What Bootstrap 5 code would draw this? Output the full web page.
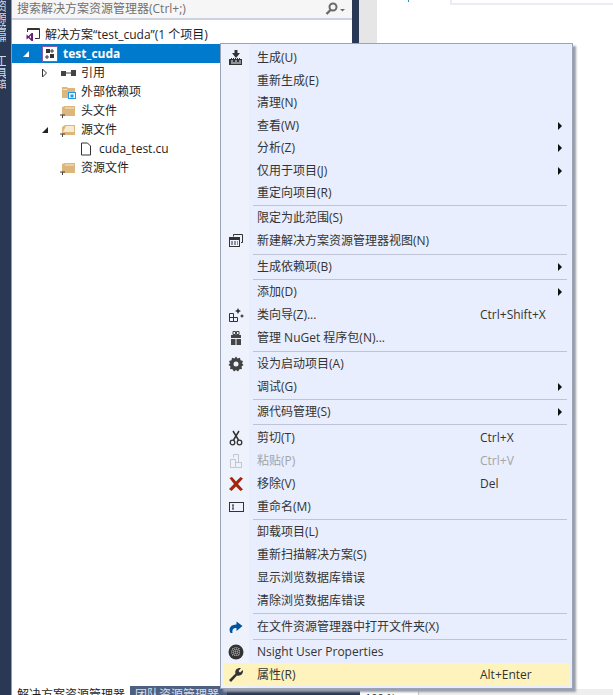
<!DOCTYPE html>
<html lang="zh">
  <head>
    <meta charset="UTF-8" />
    <title>解决方案资源管理器</title>
    <link href="https://cdn.jsdelivr.net/npm/bootstrap@5.3.0/dist/css/bootstrap.min.css" rel="stylesheet" />
    <style>
      html, body { height: 100%; overflow: hidden; }
      body { background: #fff; font: 12px/1 "Open Sans", "Noto Sans CJK SC", sans-serif; color: #1e1e1e; }
      svg { display: block; }
      .ide { width: 613px; height: 695px; position: relative; overflow: hidden; }
      .side-rail { width: 12px; background: #293955; border-right: 1px solid #8f9ab5; flex: none; overflow: hidden; color: #cfd6e6; }
      .rail-text { writing-mode: vertical-rl; width: 6px; height: 42px; overflow: hidden; white-space: nowrap; font-size: 12px; line-height: 12px; direction: ltr; }
      .rail-text + .rail-text { margin-top: 13px; height: 34px; }
      .explorer { width: 340px; flex: none; background: #fff; }
      .search-box { height: 20px; padding: 0 5px 0 5px; background: #f6f6f6; border-bottom: 2px solid #ccd2e0; color: #717171; font-size: 12px; }
      .tree { padding-top: 5px; }
      .tree-row { height: 19px; white-space: nowrap; }
      .tree-row.picked { background: #007acc; color: #fff; font-weight: 700; }
      .row-solution { padding-left: 13px; }
      .row-ref, .row-src { padding-left: 29px; }
      .row-folder { padding-left: 48px; }
      .row-file { padding-left: 68px; }
      .folder-icon { margin-right: 5px; }
      .splitter { width: 7px; background: #293955; flex: none; height: 43px; }
      .gray-strip { width: 18px; background: #e6e6e6; flex: none; height: 43px; }
      .editor { flex: 1; position: relative; }
      .editor-box { margin-left: 73px; height: 5px; border: solid #e9ecf4; border-width: 0 0 2px 2px; }
      .editor-mark { position: absolute; left: 31px; top: 0; width: 1px; height: 2px; background: #2b91af; }
      .tabs-bar { height: 9px; left: 12px; right: 253px; bottom: 0; position: absolute; background: #293955; overflow: hidden; font-size: 12px; }
      .tool-tab { padding: 3px 5px 0; height: 20px; white-space: nowrap; }
      .tool-tab.on { width: 118px; background: #fff; color: #1e1e1e; }
      .tool-tab.off { width: 97px; background: #4d6082; color: #d8dfea; }
      .ctx-menu { position: absolute; left: 220px; top: 43px; width: 353px; height: 646px; padding: 3px 2px 0; background: linear-gradient(90deg, #eef2fd 28px, #e8eefd 28px); border: 1px solid #9ba3b9; box-shadow: 3px 3px 2px #9a9ea8; color: #333; z-index: 2; }
      .ctx-item { height: 23px; white-space: nowrap; }
      .ctx-item:nth-child(-n+7) { height: 22.5px; }
      .ctx-item.hot { background: #fff3bd; }
      .ctx-item.off { color: #a2a4a5; }
      .ctx-icon { width: 26px; flex: none; margin-right: 8px; }
      .ctx-label { width: 223px; flex: none; }
      .ctx-keys { flex: 1; }
      .ctx-arrow { width: 0; height: 0; margin-right: 8px; border: 4px solid transparent; border-left: 4px solid #111; border-right-width: 0; }
      .ctx-sep { height: 1px; margin: .72px 3px .72px 30px; background: #bec3d7; }
      .status-tail { position: absolute; left: 360px; right: 0; bottom: 0; height: 6px; background: #eee; overflow: hidden; }
      .status-zoom { width: 59px; height: 100%; padding: 3px 0 0 5px; background: #fff; border-right: 1px solid #c4c4c4; font-size: 11px; white-space: nowrap; }
    </style>
  </head>
  <body>
    <div class="ide">
      <div class="d-flex h-100">
        <div class="side-rail">
          <div class="rail-text">资源管理器</div>
          <div class="rail-text">工具箱</div>
        </div>
        <div class="explorer">
          <div class="search-box d-flex align-items-center justify-content-between">
            <span>搜索解决方案资源管理器(Ctrl+;)</span>
            <svg width="22" height="14" viewBox="0 0 22 14"><circle cx="8" cy="5" r="3.500" fill="none" stroke="#6a6a6a" stroke-width="2"/><path d="M5.500 8 1.500 12" stroke="#6a6a6a" stroke-width="2.400"/><path d="M15 7h5l-2.500 2.500z" fill="#6a6a6a"/></svg>
          </div>
          <div class="tree">
            <div class="tree-row row-solution d-flex align-items-center">
              <svg class="me-1" width="16" height="15" viewBox="0 0 16 15"><path d="M2.500 5V1.500h12v10H10" fill="none" stroke="#333"/><path d="M3 2.500h11" stroke="#333"/><path d="M1.500 7.500v5l2-1.500 3 3h1.500V6H6.500l-3 3z" fill="#68217a"/><path d="M6 8.500v3L4.500 10z" fill="#fff"/></svg>
              <span>解决方案“test_cuda”(1 个项目)</span>
            </div>
            <div class="tree-row picked d-flex align-items-center">
              <svg style="margin: 0 12px 0 10px" width="8" height="8" viewBox="0 0 8 8"><path d="M7 1v6H1z" fill="#fff"/></svg>
              <svg style="margin-right: 5px" width="16" height="16" viewBox="0 0 16 16"><rect x=".5" y=".5" width="15" height="15" fill="#fff" stroke="#8a5aa5" /><path d="M4 3h4v4H4zM8 8h4v4H8z" fill="#333"/><path d="M10 3v4M8 5h4M5 9v4M3 11h4" stroke="#333"/></svg>
              <span>test_cuda</span>
            </div>
            <div class="tree-row row-ref d-flex align-items-center">
              <svg width="8" height="10" viewBox="0 0 8 10"><path d="M1.500 1v8l4-4z" fill="#fff" stroke="#333"/></svg>
              <svg style="margin: 0 5px 0 11px" width="16" height="8" viewBox="0 0 16 8"><path d="M1 2h5v5H1zM11 1h5v6h-5z" fill="#444"/><path d="M6 4h5" stroke="#444"/></svg>
              <span>引用</span>
            </div>
            <div class="tree-row row-folder d-flex align-items-center">
              <svg class="folder-icon" width="16" height="14" viewBox="0 0 16 14"><path d="M2 2h5l1 1h7v4H8v6H2z" fill="#dcb67a"/><path d="M3 4h4v1H3z" fill="#f5ead2"/><rect x="8.500" y="7.500" width="7" height="6" fill="#fff" stroke="#1c97ea"/><path d="M10.500 9.500h3v3h-3z" fill="#1c97ea"/></svg>
              <span>外部依赖项</span>
            </div>
            <div class="tree-row row-folder d-flex align-items-center">
              <svg class="folder-icon" width="16" height="14" viewBox="0 0 16 14"><path d="M2 3l3-1h10v10H2z" fill="#dcb67a"/><path d="M5 4h9" stroke="#f5ead2"/><path d="M0 11h5M2.500 11v3" stroke="#444"/></svg>
              <span>头文件</span>
            </div>
            <div class="tree-row row-src d-flex align-items-center">
              <svg style="margin-right: 11px" width="8" height="8" viewBox="0 0 8 8"><path d="M7 1v6H1z" fill="#222"/></svg>
              <svg class="folder-icon" width="16" height="14" viewBox="0 0 16 14"><path d="M2 4l3-2h10v10H2z" fill="#dcb67a"/><path d="M6 3h8v6H3z" fill="#f5ead2"/><path d="M0 11h5M2.500 11v3" stroke="#444"/></svg>
              <span>源文件</span>
            </div>
            <div class="tree-row row-file d-flex align-items-center">
              <svg style="margin-right: 7px" width="12" height="14" viewBox="0 0 12 14"><path d="M1.500 1h6l3 3v9h-9z" fill="#fff" stroke="#333"/></svg>
              <span>cuda_test.cu</span>
            </div>
            <div class="tree-row row-folder d-flex align-items-center">
              <svg class="folder-icon" width="16" height="14" viewBox="0 0 16 14"><path d="M2 3l3-1h10v10H2z" fill="#dcb67a"/><path d="M5 4h9" stroke="#f5ead2"/><path d="M0 11h5M2.500 11v3" stroke="#444"/></svg>
              <span>资源文件</span>
            </div>
          </div>
        </div>
        <div class="splitter"></div>
        <div class="gray-strip"></div>
        <div class="editor"><div class="editor-box"></div><div class="editor-mark"></div></div>
      </div>

      <div class="tabs-bar d-flex">
        <div class="tool-tab on">解决方案资源管理器</div>
        <div class="tool-tab off">团队资源管理器</div>
      </div>
      <div class="status-tail"><div class="status-zoom">100 %</div></div>

      <div class="ctx-menu" id="menu"></div>
    </div>

    <script>
      // icons for the menu gutter
      const icons = {
        build: '<path d="M6.500 0h3v3H12L8 8 4 3h2.500zM1 9h2V8h1v1h1V8h1v1h1V8h1v1h1V8h1v1h1V8h1v1h2v6H1z" fill="#333"/><path d="M3 11h2M7 11h2M11 11h2M3 13h10" stroke="#eef2fd"/>',
        view: '<path d="M5.500 3.500V1.500h9v8H13" fill="none" stroke="#333"/><rect x="1.500" y="4.500" width="10" height="9" fill="none" stroke="#333"/><path d="M2 5h9v2H2z" fill="#333"/><path d="M3 9h7M3 11h7" stroke="#333" stroke-dasharray="2 1"/>',
        wizard: '<path d="M1.500 6.500h4v8h-4zM5.500 10.500h4v4h-4zM1.500 10.500h4" fill="none" stroke="#333"/><path d="M10 1l1 2 2 1-2 1-1 2-1-2-2-1 2-1zM14 7l.7 1.300 1.300.7-1.300.7-.7 1.300-.7-1.300L12 9l1.300-.7z" fill="#333"/>',
        nuget: '<path d="M5 1.500h2.500v3H5zM8.500 1.500H11v3H8.500z" fill="none" stroke="#444"/><path d="M3 5h10v3H3zM3 9h4.500v6H3zM8.500 9H13v6H8.500z" fill="#444"/>',
        gear: '<path d="M8 .5 9.500 2.500 12 1.800 12.500 4.300 15 5 14 7.300 15.500 9 13.500 10.500 14 13 11.500 13.300 10 15.500 8 14 6 15.500 4.500 13.300 2 13 2.500 10.500.5 9 2 7.300 1 5 3.500 4.300 4 1.800 6.500 2.500z" fill="#424242"/><circle cx="8" cy="8" r="2.500" fill="#eef2fd"/>',
        cut: '<path d="M5 1l5.500 9M11 1 5.500 10" stroke="#333" stroke-width="1.500" fill="none"/><circle cx="4.500" cy="12.500" r="2.300" fill="none" stroke="#333" stroke-width="1.300"/><circle cx="11.500" cy="12.500" r="2.300" fill="none" stroke="#333" stroke-width="1.300"/>',
        paste: '<path d="M2.500 6.500h5v8h-5zM7.500 9.500h6v5h-6zM5.500 4.500v-3h5v8" fill="none" stroke="#c3c6cc"/>',
        remove: '<path d="M1.500 2 4 1l4 4.500L12.500 1l2.500 1.500L10 8l5 5.500L12.500 15 8 10.500 3.500 15 1 13l5-5z" fill="#a1260d"/>',
        rename: '<rect x="1.500" y="3.500" width="14" height="9" fill="none" stroke="#333"/><path d="M4 6h2M4 10h2M5 6v4" stroke="#333"/>',
        open: '<path d="M2.500 14C0 9 3 5.500 8.500 5.500V2.500L14.500 7l-6 5V9C5.500 9 4 10 4.500 14z" fill="#00539c"/>',
        globe: '<circle cx="8" cy="8" r="7.500" fill="#333"/><path d="M5 4v8M7 3v10M9 3v10M11 4v8M4 5h8M3 7h10M3 9h10M4 11h8" stroke="#ddd" stroke-width=".7" stroke-dasharray="1 1"/>',
        wrench: '<path d="M1 13l6.500-6.500C6.500 3 9 .5 13 1l-2.500 3 1.500 1.500 3-2.500c.5 4-2.500 6.500-6 5.500L3 15z" fill="#333"/>'
      };

      // null = separator, a = has submenu, k = shortcut, i = icon
      const items = [
        { t: "生成(U)", i: "build" }, { t: "重新生成(E)" }, { t: "清理(N)" },
        { t: "查看(W)", a: 1 }, { t: "分析(Z)", a: 1 }, { t: "仅用于项目(J)", a: 1 }, { t: "重定向项目(R)" },
        null,
        { t: "限定为此范围(S)" }, { t: "新建解决方案资源管理器视图(N)", i: "view" },
        null,
        { t: "生成依赖项(B)", a: 1 },
        null,
        { t: "添加(D)", a: 1 }, { t: "类向导(Z)...", i: "wizard", k: "Ctrl+Shift+X" }, { t: "管理 NuGet 程序包(N)...", i: "nuget" },
        null,
        { t: "设为启动项目(A)", i: "gear" }, { t: "调试(G)", a: 1 },
        null,
        { t: "源代码管理(S)", a: 1 },
        null,
        { t: "剪切(T)", i: "cut", k: "Ctrl+X" }, { t: "粘贴(P)", i: "paste", k: "Ctrl+V", off: 1 },
        { t: "移除(V)", i: "remove", k: "Del" }, { t: "重命名(M)", i: "rename" },
        null,
        { t: "卸载项目(L)" }, { t: "重新扫描解决方案(S)" }, { t: "显示浏览数据库错误" }, { t: "清除浏览数据库错误" },
        null,
        { t: "在文件资源管理器中打开文件夹(X)", i: "open" },
        null,
        { t: "Nsight User Properties", i: "globe" }, { t: "属性(R)", i: "wrench", k: "Alt+Enter", hot: 1 }
      ];

      document.getElementById("menu").innerHTML = items.map((it) => {
        if (!it) return '<div class="ctx-sep"></div>';
        const icon = it.i ? `<svg width="16" height="16" viewBox="0 0 16 16">${icons[it.i]}</svg>` : "";
        return `<div class="ctx-item d-flex align-items-center ${it.hot ? "hot" : ""} ${it.off ? "off" : ""}">
          <div class="ctx-icon d-flex justify-content-center">${icon}</div>
          <div class="ctx-label">${it.t}</div>
          <div class="ctx-keys">${it.k || ""}</div>
          ${it.a ? '<div class="ctx-arrow"></div>' : ""}
        </div>`;
      }).join("");
    </script>
    <script src="https://cdn.jsdelivr.net/npm/bootstrap@5.3.0/dist/js/bootstrap.bundle.min.js"></script>
  </body>
</html>
